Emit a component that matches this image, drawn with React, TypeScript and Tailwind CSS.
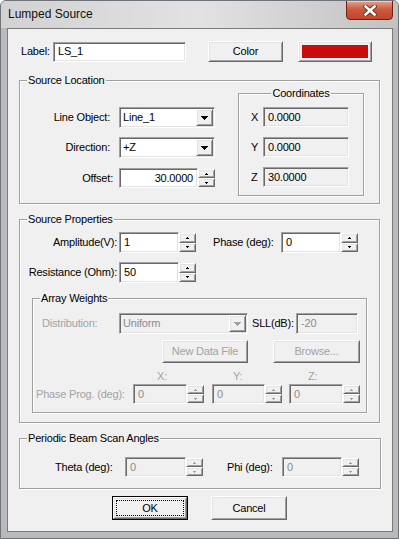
import React from 'react';

// classic 3D edges
const sunken =
  'border border-t-[#a0a0a0] border-l-[#a0a0a0] border-b-white border-r-white shadow-[inset_1px_1px_0_#696969,inset_-1px_-1px_0_#e3e3e3]';
const raised =
  'border border-t-white border-l-white border-b-[#696969] border-r-[#696969] shadow-[inset_1px_1px_0_#e3e3e3,inset_-1px_-1px_0_#a0a0a0] bg-[#f0f0f0]';

const dimLabel = 'text-[#a3a3a3]';
const dimValue = 'text-[#8c8c8c]';

function DownArrow({ color }: { color: string }) {
  return (
    <svg width="7" height="4" viewBox="0 0 7 4" shapeRendering="crispEdges">
      <rect x="0" y="0" width="7" height="1" fill={color} />
      <rect x="1" y="1" width="5" height="1" fill={color} />
      <rect x="2" y="2" width="3" height="1" fill={color} />
      <rect x="3" y="3" width="1" height="1" fill={color} />
    </svg>
  );
}

function SpinArrow({ up, color }: { up?: boolean; color: string }) {
  return (
    <svg width="3" height="2" viewBox="0 0 3 2" shapeRendering="crispEdges">
      {up ? (
        <>
          <rect x="1" y="0" width="1" height="1" fill={color} />
          <rect x="0" y="1" width="3" height="1" fill={color} />
        </>
      ) : (
        <>
          <rect x="0" y="0" width="3" height="1" fill={color} />
          <rect x="1" y="1" width="1" height="1" fill={color} />
        </>
      )}
    </svg>
  );
}

function Edit({ value, className, disabled, readOnly, right }: { value: string; className: string; disabled?: boolean; readOnly?: boolean; right?: boolean }) {
  return (
    <div
      className={`${sunken} ${className} flex items-center ${right ? 'justify-end pr-[4px]' : 'pl-[4px]'} ${
        disabled || readOnly ? 'bg-[#f0f0f0]' : 'bg-white'
      } ${disabled ? dimValue : 'text-black'}`}
    >
      {value}
    </div>
  );
}

function Combo({ value, className, disabled }: { value: string; className: string; disabled?: boolean }) {
  return (
    <div className={`${sunken} ${className} h-[21px] flex p-[1px] ${disabled ? 'bg-[#f0f0f0]' : 'bg-white'}`}>
      <span className={`flex-1 flex items-center pl-[2px] ${disabled ? dimValue : 'text-black'}`}>{value}</span>
      <div className={`${raised} w-[17px] h-full flex items-center justify-center`}>
        <DownArrow color={disabled ? '#a0a0a0' : '#000'} />
      </div>
    </div>
  );
}

function Spin({ value, className, disabled, right }: { value: string; className: string; disabled?: boolean; right?: boolean }) {
  const c = disabled ? '#a0a0a0' : '#000';
  return (
    <div className={`flex ${className}`}>
      <div
        className={`${sunken} flex-1 flex items-center ${right ? 'justify-end pr-[4px]' : 'pl-[4px]'} ${
          disabled ? `bg-[#f0f0f0] ${dimValue}` : 'bg-white text-black'
        }`}
      >
        {value}
      </div>
      <div className="w-[17px] flex flex-col py-[1px]">
        <div className={`${raised} flex-1 flex items-center justify-center`}>
          <SpinArrow up color={c} />
        </div>
        <div className={`${raised} flex-1 flex items-center justify-center`}>
          <SpinArrow color={c} />
        </div>
      </div>
    </div>
  );
}

function Btn({ label, className, disabled, def }: { label: string; className: string; disabled?: boolean; def?: boolean }) {
  if (def) {
    return (
      <div className={`${className} border border-black`}>
        <div className={`${raised} h-full p-[2px]`}>
          <div className="h-full border border-dotted border-black flex items-center justify-center">{label}</div>
        </div>
      </div>
    );
  }
  return (
    <div className={`${raised} ${className} flex items-center justify-center ${disabled ? dimLabel : 'text-black'}`}>
      {label}
    </div>
  );
}

function Group({ title, className, center, children }: { title: string; className: string; center?: boolean; children?: React.ReactNode }) {
  return (
    <fieldset className={`border border-[#a0a0a0] shadow-[inset_1px_1px_0_#fff,1px_1px_0_#fff] ${className}`}>
      <legend className={`${center ? 'mx-auto' : 'ml-[7px]'} px-[1px] leading-[13px] bg-[#f0f0f0]`}>{title}</legend>
      {children}
    </fieldset>
  );
}

export default function App() {
  return (
    <div className="w-[399px] h-[539px] flex flex-col rounded-t-[6px] border border-[#6f7479] bg-[#bababa] font-['Liberation_Sans',Arial,sans-serif] text-[11px] tracking-[-0.2px] text-black overflow-hidden">
      {/* title bar */}
      <div className="h-[27px] flex items-start bg-linear-to-r from-[#d2d2d2] via-[#e2e2e2] to-[#c2c2c2]">
        <span className="ml-[7px] mt-[6px] text-[12px] leading-[15px] tracking-normal text-[#111]">Lumped Source</span>
        <div className="ml-auto mr-[5px] w-[47px] h-[20px] mt-[-1px] rounded-b-[4px] border border-[#6b2116] bg-linear-to-b from-[#e3a08f] via-[#c9573b] to-[#c7452a] shadow-[inset_0_1px_0_rgba(255,255,255,0.5)] flex items-center justify-center">
          <svg width="14" height="11" viewBox="0 0 14 11">
            <path d="M2.5 1.5 L11.5 9.5 M11.5 1.5 L2.5 9.5" stroke="#5a3a34" strokeWidth="4.6" strokeLinecap="square" />
            <path d="M2.5 1.5 L11.5 9.5 M11.5 1.5 L2.5 9.5" stroke="#fff" strokeWidth="2.6" strokeLinecap="square" />
          </svg>
        </div>
      </div>

      {/* client area */}
      <div className="ml-[6px] w-[386px] h-[504px] border border-[#7b7b7b] bg-[#f0f0f0] flex flex-col">
        {/* label row */}
        <div className="mt-[12px] h-[21px] flex items-center">
          <span className="ml-[13px] w-[32px]">Label:</span>
          <Edit value="LS_1" className="w-[133px] h-[20px]" />
          <Btn label="Color" className="ml-[22px] w-[75px] h-[21px]" />
          <div className={`${raised} ml-[15px] w-[74px] h-[21px] p-[3px]`}>
            <div className="h-full bg-[#c90b0b]" />
          </div>
        </div>

        {/* source location */}
        <Group title="Source Location" className="ml-[11px] mt-[12px] w-[361px] h-[130px]">
          <div className="flex items-start">
            <div className="mt-[20px] flex flex-col">
              <div className="h-[21px] flex items-center">
                <span className="w-[90px] text-right">Line Object:</span>
                <Combo value="Line_1" className="ml-[9px] w-[96px]" />
              </div>
              <div className="mt-[9px] h-[21px] flex items-center">
                <span className="w-[90px] text-right">Direction:</span>
                <Combo value="+Z" className="ml-[9px] w-[96px]" />
              </div>
              <div className="mt-[10px] h-[20px] flex items-center">
                <span className="w-[93px] text-right">Offset:</span>
                <Spin value="30.0000" right className="ml-[6px] w-[96px] h-[20px]" />
              </div>
            </div>
            <Group title="Coordinates" center className="ml-[23px] w-[126px] h-[109px]">
              <div className="mt-[7px] flex flex-col gap-[10px]">
                {[
                  ['X', '0.0000'],
                  ['Y', '0.0000'],
                  ['Z', '30.0000'],
                ].map(([k, v]) => (
                  <div key={k} className="h-[20px] flex items-center">
                    <span className="ml-[12px] w-[12px]">{k}</span>
                    <Edit value={v} readOnly className="w-[86px] h-[20px]" />
                  </div>
                ))}
              </div>
            </Group>
          </div>
        </Group>

        {/* source properties */}
        <Group title="Source Properties" className="ml-[11px] mt-[9px] w-[361px] h-[210px]">
          <div className="mt-[6px] h-[21px] flex items-center">
            <span className="w-[97px] text-right">Amplitude(V):</span>
            <Spin value="1" className="ml-[2px] w-[77px] h-[21px]" />
            <span className="ml-[17px] w-[68px]">Phase (deg):</span>
            <Spin value="0" className="w-[77px] h-[21px]" />
          </div>
          <div className="mt-[9px] h-[21px] flex items-center">
            <span className="w-[97px] text-right">Resistance (Ohm):</span>
            <Spin value="50" className="ml-[2px] w-[77px] h-[21px]" />
          </div>

          <Group title="Array Weights" className="ml-[12px] mt-[9px] w-[335px] h-[121px]">
            <div className="mt-[8px] h-[21px] flex items-center">
              <span className={`ml-[9px] w-[77px] ${dimLabel}`}>Distribution:</span>
              <Combo value="Uniform" disabled className="w-[129px]" />
              <span className="ml-[4px] w-[44px]">SLL(dB):</span>
              <Edit value="-20" disabled className="w-[62px] h-[21px]" />
            </div>
            <div className="mt-[6px] h-[23px] flex">
              <Btn label="New Data File" disabled className="ml-[129px] w-[86px] h-[23px]" />
              <Btn label="Browse..." disabled className="ml-[25px] w-[87px] h-[23px]" />
            </div>
            <div className={`mt-[7px] h-[13px] flex items-center ${dimLabel}`}>
              <span className="ml-[124px] w-[10px]">X:</span>
              <span className="ml-[66px] w-[10px]">Y:</span>
              <span className="ml-[65px] w-[10px]">Z:</span>
            </div>
            <div className="mt-[1px] h-[20px] flex items-center">
              <span className={`ml-[3px] w-[97px] ${dimLabel}`}>Phase Prog. (deg):</span>
              <Spin value="0" disabled className="w-[71px] h-[20px]" />
              <Spin value="0" disabled className="ml-[8px] w-[70px] h-[20px]" />
              <Spin value="0" disabled className="ml-[7px] w-[71px] h-[20px]" />
            </div>
          </Group>
        </Group>

        {/* periodic beam scan */}
        <Group title="Periodic Beam Scan Angles" className="ml-[11px] mt-[9px] w-[362px] h-[57px]">
          <div className="mt-[12px] h-[20px] flex items-center">
            <span className="ml-[35px] w-[70px]">Theta (deg):</span>
            <Spin value="0" disabled className="w-[78px] h-[20px]" />
            <span className="ml-[24px] w-[55px]">Phi (deg):</span>
            <Spin value="0" disabled className="w-[77px] h-[20px]" />
          </div>
        </Group>

        {/* dialog buttons */}
        <div className="mt-[7px] h-[24px] flex">
          <Btn label="OK" def className="ml-[104px] w-[76px] h-[24px]" />
          <Btn label="Cancel" className="ml-[23px] w-[76px] h-[24px]" />
        </div>
      </div>
    </div>
  );
}
